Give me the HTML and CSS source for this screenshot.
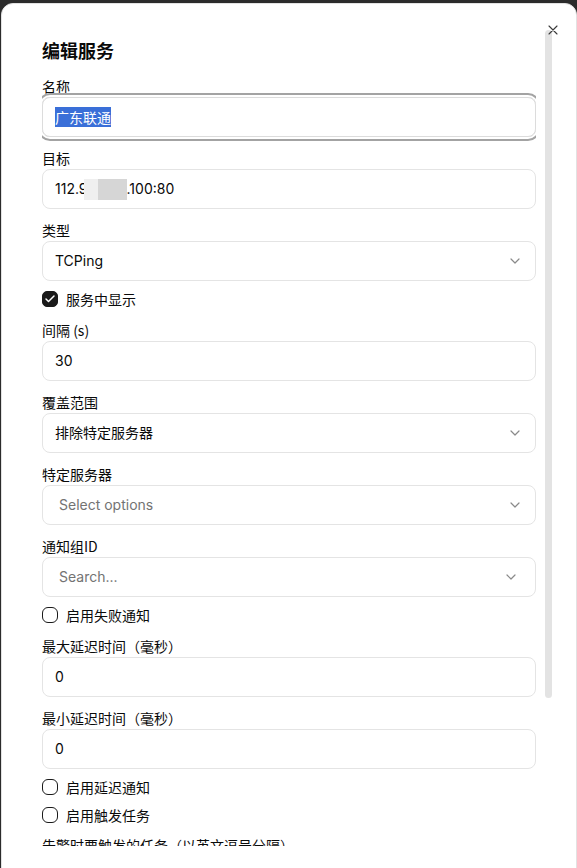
FILE: index.html
```html
<!DOCTYPE html>
<html lang="zh-CN">
<head>
<meta charset="utf-8">
<title>编辑服务</title>
<link rel="stylesheet" href="styles.css">
</head>
<body>
<div class="modal">
  <button class="close" aria-label="关闭">
    <svg viewBox="0 0 24 24" width="16" height="16"><path d="M18 6 6 18M6 6l12 12" fill="none" stroke="#3a3a3a" stroke-width="1.7" stroke-linecap="round"/></svg>
  </button>
  <div class="content">
    <h2 class="title">编辑服务</h2>

    <div class="field">
      <label class="label">名称</label>
      <div class="input focused"><span class="selected">广东联通</span></div>
    </div>

    <div class="field">
      <label class="label">目标</label>
      <div class="input">112.9<span class="blur"></span>.100:80</div>
    </div>

    <div class="field">
      <label class="label">类型</label>
      <div class="input select"><span>TCPing</span>
        <svg class="chev" viewBox="0 0 24 24"><path d="m6 9 6 6 6-6"/></svg></div>
    </div>

    <div class="check-row">
      <span class="box checked"><svg viewBox="0 0 24 24"><path d="M20 6 9 17l-5-5"/></svg></span>
      <span>服务中显示</span>
    </div>

    <div class="field">
      <label class="label">间隔 (s)</label>
      <div class="input">30</div>
    </div>

    <div class="field">
      <label class="label">覆盖范围</label>
      <div class="input select"><span>排除特定服务器</span>
        <svg class="chev" viewBox="0 0 24 24"><path d="m6 9 6 6 6-6"/></svg></div>
    </div>

    <div class="field">
      <label class="label">特定服务器</label>
      <div class="input select multi"><span class="placeholder">Select options</span>
        <svg class="chev" viewBox="0 0 24 24"><path d="m6 9 6 6 6-6"/></svg></div>
    </div>

    <div class="field">
      <label class="label">通知组ID</label>
      <div class="input select multi search"><span class="placeholder">Search...</span>
        <svg class="chev" viewBox="0 0 24 24"><path d="m6 9 6 6 6-6"/></svg></div>
    </div>

    <div class="check-row">
      <span class="box"></span>
      <span>启用失败通知</span>
    </div>

    <div class="field">
      <label class="label">最大延迟时间（毫秒）</label>
      <div class="input">0</div>
    </div>

    <div class="field">
      <label class="label">最小延迟时间（毫秒）</label>
      <div class="input">0</div>
    </div>

    <div class="check-row">
      <span class="box"></span>
      <span>启用延迟通知</span>
    </div>

    <div class="check-row">
      <span class="box"></span>
      <span>启用触发任务</span>
    </div>

    <div class="field last">
      <label class="label">告警时要触发的任务（以英文逗号分隔）</label>
      <div class="input"></div>
    </div>
  </div>
  <div class="scrollbar"></div>
</div>
</body>
</html>
```

FILE: styles.css
```css
* { box-sizing: border-box; }

html, body {
  margin: 0;
  height: 868px;
  overflow: hidden;
}

body {
  background: #2b2b2b;
  padding: 3px 0 0 1px;
  font-family: Inter, "Noto Sans CJK SC", sans-serif;
  font-size: 14px;
  color: #0a0a0a;
}

.modal {
  position: relative;
  display: flex;
  align-items: flex-start;
  width: 576px;
  height: 900px;
  background: #fff;
  border: 1px solid #e2e2e2;
  border-radius: 12px;
}

.close {
  position: absolute;
  top: 17px;
  left: 542px;
  width: 18px;
  height: 18px;
  padding: 0;
  border: 0;
  background: transparent;
  display: flex;
  align-items: center;
  justify-content: center;
  z-index: 2;
}

.content {
  width: 494px;
  margin-left: 40px;
  height: 842px;
  overflow: hidden;
  padding-top: 32px;
  display: flex;
  flex-direction: column;
  gap: 11px;
}

.title {
  margin: 0 0 1px;
  font-size: 18px;
  line-height: 28px;
  font-weight: 700;
  font-family: "Noto Sans CJK SC", sans-serif;
}

.field {
  display: flex;
  flex-direction: column;
  gap: 1px;
}

.field.last {
  margin-top: -1px;
}

.label {
  line-height: 20px;
  font-family: "Noto Sans CJK SC", sans-serif;
  font-weight: 400;
}

.input {
  height: 40px;
  border: 1px solid #e4e4e4;
  border-radius: 8px;
  padding: 0 12px;
  display: flex;
  align-items: center;
  flex-shrink: 0;
  line-height: 20px;
  white-space: nowrap;
}

.input.focused {
  border-color: #dcdcdc;
  box-shadow: 0 0 0 2px #fff, 0 0 0 4px #a3a3a3;
}

.selected {
  background: #3a6fd8;
  color: #fff;
  font-family: "Noto Sans CJK SC", sans-serif;
}

.blur {
  display: inline-block;
  width: 43px;
  height: 21px;
  margin-left: -4px;
  background: linear-gradient(to right, #efefef 0 14px, #d6d6d6 14px);
}

.select {
  justify-content: space-between;
  font-family: "Noto Sans CJK SC", Inter, sans-serif;
}

.select > span:first-child {
  font-family: Inter, "Noto Sans CJK SC", sans-serif;
}

.select.multi {
  padding-left: 16px;
}

.select.search {
  padding-right: 16px;
}

.placeholder {
  color: #737373;
}

.chev {
  width: 16px;
  height: 16px;
  fill: none;
  stroke: #8a8a8a;
  stroke-width: 1.8;
  stroke-linecap: round;
  stroke-linejoin: round;
}

.check-row {
  display: flex;
  align-items: center;
  gap: 8px;
  height: 20px;
  margin-top: -3px;
  flex-shrink: 0;
  font-family: "Noto Sans CJK SC", sans-serif;
}

.box {
  width: 16px;
  height: 16px;
  border: 1.5px solid #1a1a1a;
  border-radius: 6px;
  display: flex;
  align-items: center;
  justify-content: center;
}

.box.checked {
  background: #1a1a1a;
  border-radius: 5px;
}

.box svg {
  width: 12px;
  height: 12px;
  fill: none;
  stroke: #fff;
  stroke-width: 3;
  stroke-linecap: round;
  stroke-linejoin: round;
}

.scrollbar {
  width: 7px;
  height: 668px;
  margin-left: 9px;
  margin-top: 26px;
  background: #e3e3e3;
  border-radius: 4px;
}
```
